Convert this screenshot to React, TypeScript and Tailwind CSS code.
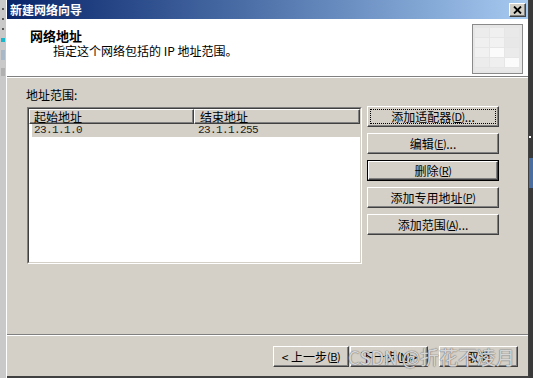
import React from 'react';

const cjk = "font-['SimSun','Noto_Sans_CJK_SC',sans-serif]";

function WinButton({
  children,
  width,
  isDefault,
  focused,
}: {
  children: React.ReactNode;
  width: string;
  isDefault?: boolean;
  focused?: boolean;
}) {
  const face = (
    <div className="h-full w-full border border-t-white border-l-white border-r-[#404040] border-b-[#404040] shadow-[inset_-1px_-1px_0_#808080] flex items-center justify-center">
      <div
        className={
          'flex items-center justify-center px-[3px] h-[13px] ' +
          (focused ? 'w-[calc(100%-6px)] outline outline-1 outline-dotted outline-black' : '')
        }
      >
        {children}
      </div>
    </div>
  );
  if (isDefault) {
    return (
      <div className={`${width} h-[21px] border border-black bg-[#d4d0c8]`}>{face}</div>
    );
  }
  return <div className={`${width} h-[21px] bg-[#d4d0c8]`}>{face}</div>;
}

function Key({ k }: { k: string }) {
  return (
    <span className="text-[11px] tracking-[-0.5px]">
      (<span className="underline">{k}</span>)
    </span>
  );
}

function HeaderIcon() {
  return (
    <svg width="51" height="50" viewBox="0 0 51 50">
      <rect x="0.5" y="0.5" width="50" height="49" fill="#ededed" stroke="#8a8a8a" />
      <rect x="1" y="1" width="49" height="48" fill="#e6e6e6" />
      <rect x="3" y="4" width="14" height="9" fill="#ececec" />
      <rect x="18" y="4" width="14" height="9" fill="#f0f0f0" />
      <rect x="33" y="4" width="14" height="9" fill="#e9e9e9" />
      <rect x="3" y="14" width="14" height="9" fill="#f0f0f0" />
      <rect x="18" y="14" width="14" height="9" fill="#f2f2f2" />
      <rect x="33" y="14" width="14" height="9" fill="#e8e8e8" />
      <rect x="3" y="24" width="14" height="9" fill="#f1f1f1" />
      <rect x="18" y="24" width="14" height="9" fill="#fbfbfb" />
      <rect x="33" y="24" width="14" height="9" fill="#ebebeb" />
      <rect x="3" y="34" width="14" height="9" fill="#ececec" />
      <rect x="18" y="34" width="14" height="9" fill="#efefef" />
      <rect x="33" y="34" width="14" height="9" fill="#fbfbfb" />
      <rect x="3" y="44" width="44" height="3" fill="#e9e9e9" />
    </svg>
  );
}

export default function App() {
  return (
    <div className={`w-[533px] h-[378px] flex overflow-hidden text-[12px] text-black ${cjk}`}>
      {/* desktop strip on the left */}
      <div className="w-[6px] h-full bg-[#c9c9c9] flex flex-col items-center pt-[8px] gap-[8px]">
        <div className="w-[2px] h-[2px] bg-[#555]" />
        <div className="w-[2px] h-[2px] bg-[#555]" />
        <div className="w-[2px] h-[2px] bg-[#555]" />
        <div className="w-[4px] h-[4px] bg-[#19b6c9]" />
        <div className="w-[4px] h-[10px] bg-[#a9b8c8]" />
        <div className="w-[4px] h-[8px] bg-[#b0b0b0]" />
      </div>

      {/* dialog */}
      <div className="w-[523px] h-full flex flex-col bg-[#d4d0c8] border-l border-l-white border-r border-r-[#404040]">
        {/* title bar */}
        <div className="h-[19px] flex items-center justify-between pl-[3px] pr-[2px] bg-gradient-to-r from-[#0a246a] to-[#a6caf0]">
          <span className="text-white font-bold text-[12px] leading-[14px]">新建网络向导</span>
          <div className="w-[17px] h-[14px] bg-[#d4d0c8] border border-t-white border-l-white border-r-[#404040] border-b-[#404040] shadow-[inset_-1px_-1px_0_#808080] flex items-center justify-center">
            <svg width="9" height="8" viewBox="0 0 9 8">
              <path d="M1 0.5 L8 7.5 M8 0.5 L1 7.5" stroke="#000" strokeWidth="1.8" />
            </svg>
          </div>
        </div>

        {/* header */}
        <div className="h-[58px] bg-white flex justify-between border-b border-b-[#808080]">
          <div className="pl-[23px] pt-[10px]">
            <div className="font-bold text-[13px] leading-[14px]">网络地址</div>
            <div className="pl-[23px] pt-[1px] leading-[14px]">指定这个网络包括的 IP 地址范围。</div>
          </div>
          <div className="pt-[5px] pr-[5px]">
            <HeaderIcon />
          </div>
        </div>

        {/* body */}
        <div className="flex-1 flex flex-col border-t border-t-white">
          <div className="pl-[19px] pt-[10px] h-[29px] leading-[14px]">地址范围:</div>
          <div className="flex pl-[20px] gap-[5px]">
            {/* list */}
            <div className="w-[335px] h-[157px] bg-white border border-t-[#808080] border-l-[#808080] border-r-white border-b-white">
              <div className="h-full w-full border border-t-[#404040] border-l-[#404040] border-r-[#d4d0c8] border-b-[#d4d0c8] flex flex-col">
                <div className="flex h-[15px] leading-[13px]">
                  <div className="w-[165px] bg-[#d4d0c8] border border-t-white border-l-white border-r-[#404040] border-b-[#404040] shadow-[inset_-1px_-1px_0_#808080] pl-[4px]">
                    起始地址
                  </div>
                  <div className="w-[166px] bg-[#d4d0c8] border border-t-white border-l-white border-r-[#404040] border-b-[#404040] shadow-[inset_-1px_-1px_0_#808080] pl-[5px]">
                    结束地址
                  </div>
                </div>
                <div className="flex h-[13px] ml-[3px] bg-[#d4d0c8] items-center font-['Liberation_Mono',monospace] text-[11px] tracking-[-0.6px] text-[#222]">
                  <div className="w-[163px] pl-[2px]">23.1.1.0</div>
                  <div className="pl-[3px]">23.1.1.255</div>
                </div>
              </div>
            </div>

            {/* side buttons */}
            <div className="flex flex-col gap-[6px] -mt-[1px]">
              <WinButton width="w-[132px]" focused>
                添加适配器 <Key k="D" />...
              </WinButton>
              <WinButton width="w-[132px]">
                编辑 <Key k="E" />...
              </WinButton>
              <WinButton width="w-[132px]" isDefault>
                删除 <Key k="R" />
              </WinButton>
              <WinButton width="w-[132px]">
                添加专用地址 <Key k="P" />
              </WinButton>
              <WinButton width="w-[132px]">
                添加范围 <Key k="A" />...
              </WinButton>
            </div>
          </div>
        </div>

        {/* separator */}
        <div className="h-[2px] border-t border-t-[#808080] border-b border-b-white" />

        {/* footer */}
        <div className="relative h-[42px] flex justify-end items-start pt-[10px] pr-[10px] border-b-2 border-b-[#404040]">
          <div className="flex">
            <WinButton width="w-[76px]">
              &lt; 上一步 <Key k="B" />
            </WinButton>
            <div className="w-[1px]" />
            <WinButton width="w-[78px]">
              下一步 <Key k="N" /> &gt;
            </WinButton>
            <div className="w-[11px]" />
            <WinButton width="w-[79px]">取消</WinButton>
          </div>
          <div className="absolute left-[341px] top-[9px] text-[19px] leading-[24px] whitespace-nowrap text-[#f4f4f4]/80 font-['Noto_Sans_CJK_SC',sans-serif] [text-shadow:0_0_1px_#666,0_0_1px_#666]">
            CSDN @折花不凌月
          </div>
        </div>
      </div>

      {/* right dark strip */}
      <div className="w-[4px] h-full bg-[#3a3a3a] flex flex-col">
        <div className="h-[136px]" />
        <div className="h-[2px] w-[2px] bg-white" />
        <div className="h-[20px]" />
        <div className="h-[30px] bg-[#4a6ea0]" />
      </div>
    </div>
  );
}
